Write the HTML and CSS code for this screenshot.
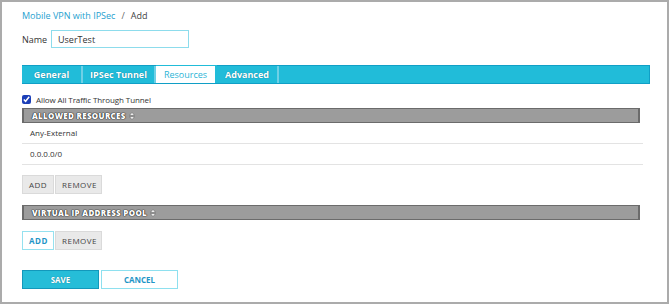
FILE: index.html
```html
<!DOCTYPE html>
<html lang="en">
<head>
  <meta charset="UTF-8">
  <title>Mobile VPN with IPSec / Add</title>
  <link rel="stylesheet" href="styles.css">
</head>
<body>
  <div class="page">
    <!-- Breadcrumb -->
    <div class="crumb"><a href="#">Mobile VPN with IPSec</a><span class="sep">/</span>Add</div>

    <!-- Name -->
    <div class="name-row">
      <label for="name">Name</label>
      <input type="text" id="name" value="UserTest">
    </div>

    <!-- Tabs -->
    <ul class="tabs">
      <li class="tab t-general">General</li>
      <li class="tab t-ipsec">IPSec Tunnel</li>
      <li class="tab t-res active">Resources</li>
      <li class="tab t-adv">Advanced</li>
    </ul>

    <label class="check"><input type="checkbox" checked> Allow All Traffic Through Tunnel</label>

    <!-- Allowed resources -->
    <div class="grid-head">ALLOWED RESOURCES
      <svg class="sort" width="6" height="8" viewBox="0 0 6 8"><path d="M3 0.5 L5.5 3.3 H0.5 Z M3 7.5 L5.5 4.7 H0.5 Z" fill="#fff" stroke="#555" stroke-width="0.5"/></svg>
    </div>
    <ul class="rows">
      <li>Any-External</li>
      <li>0.0.0.0/0</li>
    </ul>
    <div class="btns first">
      <button class="btn">ADD</button>
      <button class="btn">REMOVE</button>
    </div>

    <!-- Virtual IP pool -->
    <div class="grid-head pool">VIRTUAL IP ADDRESS POOL
      <svg class="sort" width="6" height="8" viewBox="0 0 6 8"><path d="M3 0.5 L5.5 3.3 H0.5 Z M3 7.5 L5.5 4.7 H0.5 Z" fill="#fff" stroke="#555" stroke-width="0.5"/></svg>
    </div>
    <div class="btns second">
      <button class="btn focus">ADD</button>
      <button class="btn">REMOVE</button>
    </div>

    <div class="actions">
      <button class="save">SAVE</button>
      <button class="cancel">CANCEL</button>
    </div>
  </div>
</body>
</html>
```

FILE: styles.css
```css
* {
  margin: 0;
  padding: 0;
  box-sizing: border-box;
  font-family: 'Open Sans', sans-serif;
}

html, body {
  width: 669px;
  height: 304px;
  overflow: hidden;
}

body {
  background-color: #fff;
  color: #333;
}

a {
  text-decoration: none;
  color: #1f9fcf;
}

ul {
  list-style-type: none;
}

.page {
  height: 304px;
  border: 2px solid #ababab;
  padding: 8px 0 0 20px;
}

.crumb {
  font-size: 9px;
  line-height: 12px;
  color: #444;
}

.crumb .sep {
  margin: 0 6px;
  color: #666;
}

.name-row {
  display: flex;
  align-items: center;
  margin-top: 8px;
  height: 18px;
}

.name-row label {
  font-size: 9px;
  color: #333;
  width: 29px;
}

.name-row input {
  width: 138px;
  height: 18px;
  border: 1px solid #8ddcec;
  padding: 0 6px;
  font-size: 9px;
  color: #333;
  outline: none;
}

.tabs {
  display: flex;
  margin-top: 17px;
  width: 628px;
  height: 19px;
  background-color: #21bcd9;
  border: 1px solid #109fc6;
  border-left: none;
}

.tab {
  height: 17px;
  line-height: 17px;
  text-align: center;
  font-size: 9px;
  font-weight: bold;
  color: #fff;
  text-shadow: 0 0 1px #0a6f8a;
  border-right: 2px solid #6fd0e6;
}

.t-general { width: 61px; }
.t-ipsec { width: 73px; }
.t-res { width: 61px; }
.t-adv { width: 62px; }

.tab.active {
  background-color: #fff;
  color: #2bb4d6;
  font-weight: normal;
  text-shadow: none;
  height: 18px;
  margin-top: -1px;
  border-top: 1px solid #21bcd9;
  border-right: 2px solid #21bcd9;
}

.check {
  display: flex;
  align-items: center;
  gap: 5px;
  margin-top: 9px;
  height: 12px;
  font-size: 8px;
  letter-spacing: -0.1px;
  color: #333;
}

.check input {
  width: 9px;
  height: 9px;
  margin: 0;
  accent-color: #1c3fb8;
}

.grid-head {
  display: flex;
  align-items: center;
  gap: 3px;
  margin-top: 3px;
  width: 618px;
  height: 15px;
  background-color: #9c9c9c;
  border: 1px solid #6b6b6b;
  border-left-width: 2px;
  border-right-width: 2px;
  padding-left: 8px;
  font-size: 8px;
  font-weight: 800;
  letter-spacing: 0.3px;
  color: #fff;
  text-shadow: 0 0 1px #222, 0 0 1px #222, 0 0 1px #222;
}

.rows {
  width: 621px;
}

.rows li {
  height: 21px;
  line-height: 20px;
  border-bottom: 1px solid #e3e3e3;
  padding-left: 8px;
  font-size: 8px;
  color: #333;
}

.btns {
  display: flex;
  height: 19px;
}

.btns.first {
  margin-top: 10px;
}

.btns.second {
  margin-top: 11px;
}

.btn {
  height: 19px;
  padding: 0 6px;
  background-color: #e9e9e9;
  border: 1px solid #dadada;
  font-size: 8px;
  letter-spacing: 0.5px;
  color: #444;
  margin-right: 1px;
}

.btn:first-child {
  width: 32px;
}

.btn:last-child {
  width: 47px;
}

.btn.focus {
  background-color: #fff;
  border-color: #95e1ef;
  color: #1f95c6;
  font-weight: bold;
}

.pool {
  margin-top: 11px;
}

.actions {
  display: flex;
  gap: 2px;
  margin-top: 20px;
}

.save,
.cancel {
  width: 77px;
  height: 19px;
  font-size: 8px;
  font-weight: bold;
  cursor: pointer;
}

.save {
  background-color: #26bdd8;
  border: 1px solid #1398bb;
  color: #fff;
  text-shadow: 0 0 1px #0a6f8a;
}

.cancel {
  background-color: #fff;
  border: 1px solid #8ee0ef;
  color: #1f95c6;
}
```
